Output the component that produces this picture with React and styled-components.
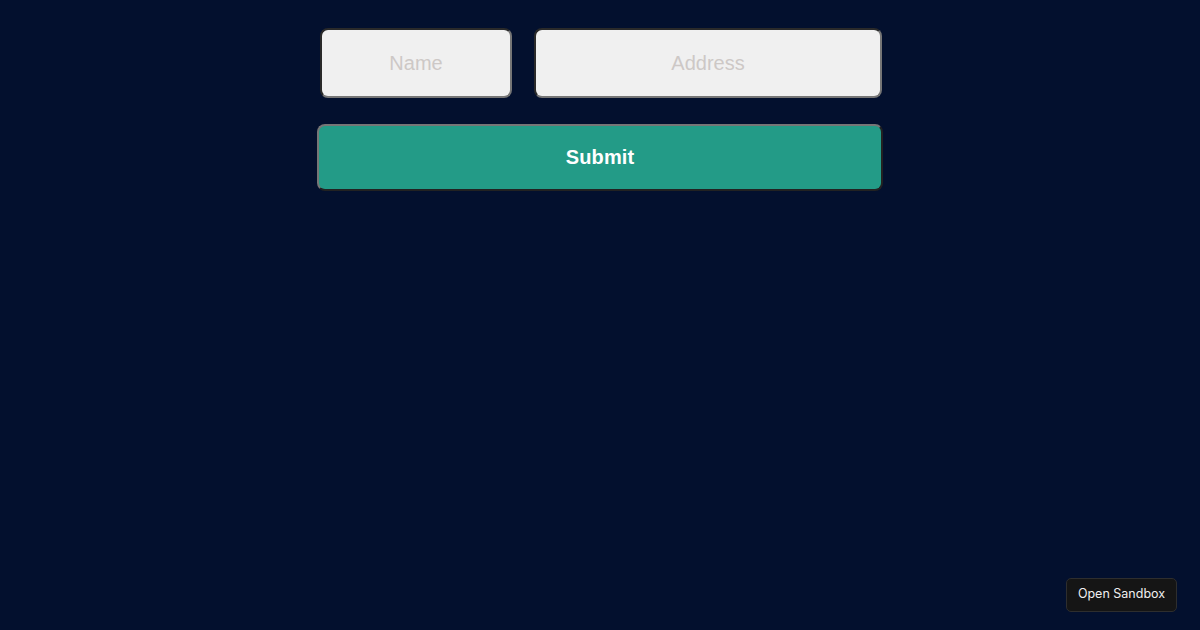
import React from "react";
import styled, { createGlobalStyle } from "styled-components";

const Global = createGlobalStyle`
  html, body { margin: 0; padding: 0; background: #03102e; }
  body { font-family: "Liberation Sans", Arial, sans-serif; }
`;

const Page = styled.div`
  width: 1200px;
  height: 630px;
  background: #03102e;
  display: flex;
  justify-content: center;
`;

const Form = styled.form`
  width: 566px;
  margin-top: 28px;
  display: flex;
  flex-direction: column;
  gap: 26px;
`;

const Row = styled.div`
  display: flex;
  gap: 22px;
  padding-left: 3px;
`;

const Field = styled.input`
  box-sizing: border-box;
  width: ${(p) => p.$w}px;
  height: 70px;
  background: #f0f0f0;
  border: 2px solid #767676;
  border-top-color: #2a2a2a;
  border-left-color: #2a2a2a;
  border-radius: 8px;
  font-family: "Liberation Sans", Arial, sans-serif;
  font-size: 20px;
  text-align: center;
  color: #333;
  outline: none;
  &::placeholder { color: #cdc8c6; }
`;

const Submit = styled.button`
  box-sizing: border-box;
  width: 566px;
  height: 67px;
  background: #239b87;
  border: 2px solid #767676;
  border-right-color: #222;
  border-bottom-color: #222;
  border-radius: 8px;
  color: #fff;
  font-family: "Liberation Sans", Arial, sans-serif;
  font-weight: bold;
  font-size: 20px;
  letter-spacing: 0.1px;
  cursor: pointer;
`;

const SandboxButton = styled.button`
  position: fixed;
  right: 23px;
  bottom: 18px;
  box-sizing: border-box;
  width: 111px;
  height: 34px;
  background: #151515;
  border: 1px solid #2e2e2e;
  border-radius: 5px;
  color: #f0f0f0;
  font-family: Inter, "Liberation Sans", sans-serif;
  font-size: 12.5px;
  padding: 0 0 3px;
`;

export default function App() {
  return (
    <>
      <Global />
      <Page>
        <Form onSubmit={(e) => e.preventDefault()}>
          <Row>
            <Field $w={192} placeholder="Name" />
            <Field $w={348} placeholder="Address" />
          </Row>
          <Submit type="submit">Submit</Submit>
        </Form>
      </Page>
      <SandboxButton>Open Sandbox</SandboxButton>
    </>
  );
}
